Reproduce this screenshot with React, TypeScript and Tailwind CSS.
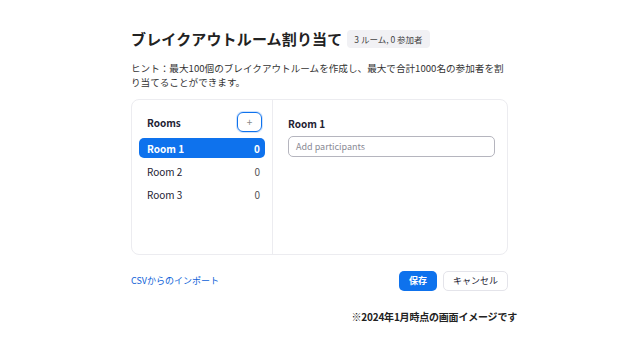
import React from "react";

const font = { fontFamily: '"Noto Sans CJK JP", "Noto Sans", sans-serif' };

export default function App() {
  return (
    <div
      className="w-[644px] h-[345px] bg-white pt-[27px] pl-[131px] text-[#232333]"
      style={font}
    >
      <div className="flex items-center gap-[5px] h-[24px]">
        <h1 className="text-[15px] tracking-[0.01em] font-bold leading-[24px] text-[#222]">
          ブレイクアウトルーム割り当て
        </h1>
        <span className="text-[8.5px] leading-[18px] px-[7px] rounded bg-[#f1f1f4] text-[#444]">
          3 ルーム, 0 参加者
        </span>
      </div>
      <p className="mt-[10px] text-[9.6px] leading-[14px] text-[#333]">
        ヒント：最大100個のブレイクアウトルームを作成し、最大で合計1000名の参加者を割
        <br />
        り当てることができます。
      </p>
      <div className="mt-[10px] w-[377px] h-[156px] border border-[#ececf0] rounded-lg flex">
        <div className="w-[141px] border-r border-[#ececf0] px-[7px] pt-[12px]">
          <div className="flex items-center justify-between h-[20px] pl-2 pr-[3px]">
            <span className="text-[10px] font-bold">Rooms</span>
            <button className="w-[25px] h-[20px] rounded-[6px] border-[1.5px] border-[#0e72ed] shadow-[0_0_0_1px_#cfe2fc] flex items-center justify-center text-[10px] leading-none text-[#888]">
              +
            </button>
          </div>
          <div className="mt-[6px] flex flex-col gap-[3px]">
            <div className="h-[20px] rounded-[5px] bg-[#0e72ed] text-white font-bold flex items-center justify-between pl-2 pr-[5px] text-[10px]">
              <span>Room 1</span>
              <span>0</span>
            </div>
            <div className="h-[20px] flex items-center justify-between pl-2 pr-[5px] text-[10px]">
              <span>Room 2</span>
              <span className="text-[#555]">0</span>
            </div>
            <div className="h-[20px] flex items-center justify-between pl-2 pr-[5px] text-[10px]">
              <span>Room 3</span>
              <span className="text-[#555]">0</span>
            </div>
          </div>
        </div>
        <div className="flex-1 pl-[15px] pt-[16px]">
          <div className="text-[10px] font-bold leading-[16px]">Room 1</div>
          <div className="mt-[4px] w-[207px] h-[21px] border border-[#b5b5be] rounded-[5px] flex items-center pl-[7px] text-[9px] text-[#8a8a95]">
            Add participants
          </div>
        </div>
      </div>
      <div className="mt-[16px] w-[377px] flex items-center justify-between">
        <span className="text-[9px] text-[#0e5fd8]">CSVからのインポート</span>
        <div className="flex items-center gap-[6px]">
          <button className="w-[38px] h-[20px] rounded-[5px] bg-[#0e72ed] text-white text-[9px] font-bold flex items-center justify-center">
            保存
          </button>
          <button className="w-[65px] h-[20px] rounded-[5px] border border-[#e4e4ea] bg-white text-[9px] text-[#232333] flex items-center justify-center">
            キャンセル
          </button>
        </div>
      </div>
      <div className="mt-[18px] w-[386px] text-right text-[10px] tracking-[-0.02em] font-bold leading-[16px] text-[#222]">
        ※2024年1月時点の画面イメージです
      </div>
    </div>
  );
}
